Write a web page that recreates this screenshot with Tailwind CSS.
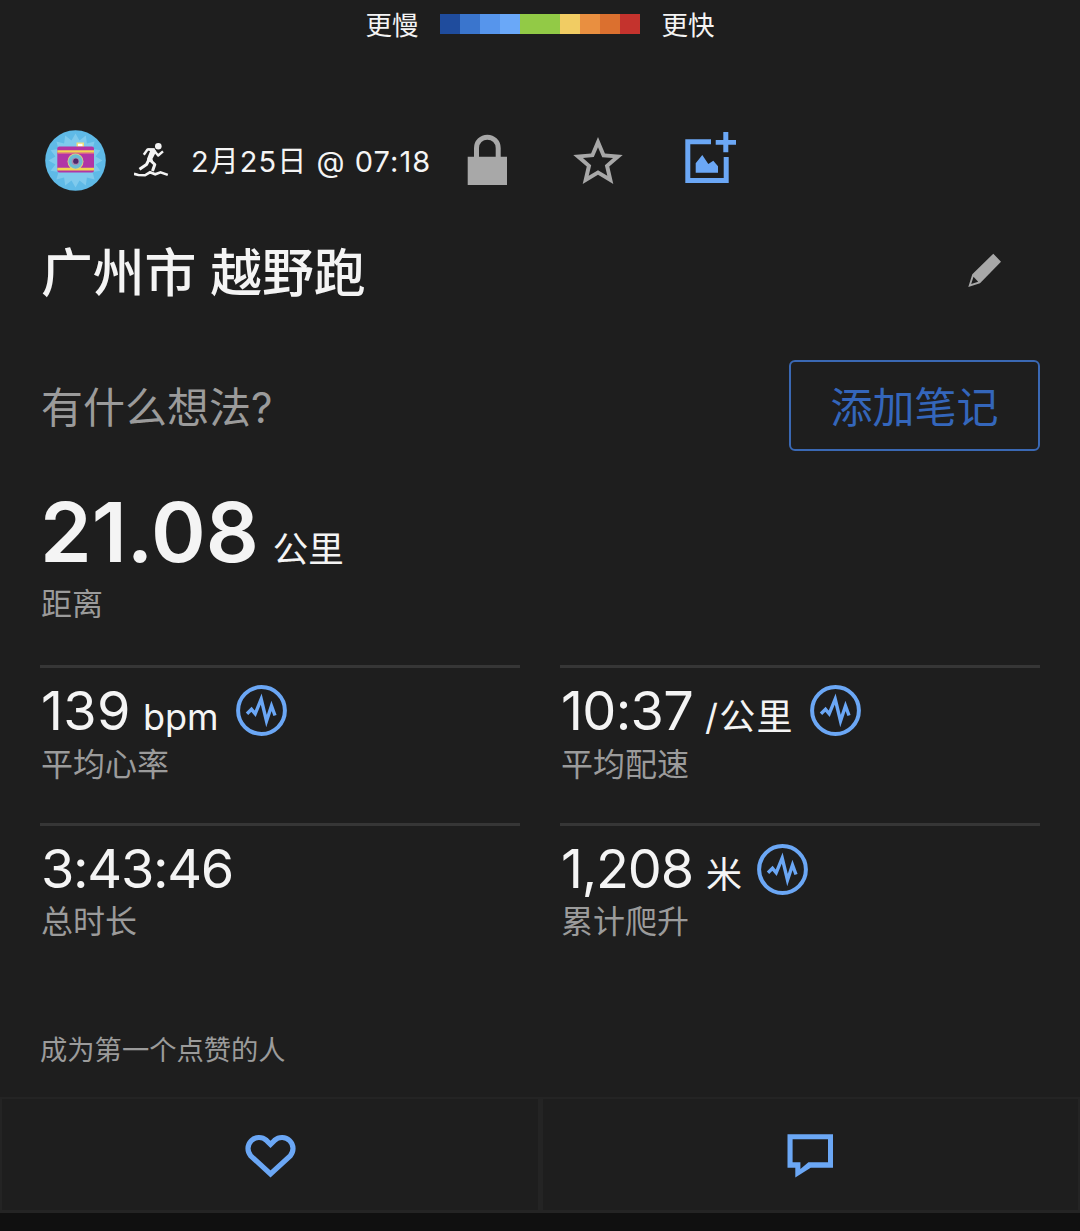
<!DOCTYPE html>
<html lang="zh-CN">
<head>
  <meta charset="UTF-8">
  <meta name="viewport" content="width=device-width, initial-scale=1.0">
  <title>广州市 越野跑</title>
  <script src="https://cdn.jsdelivr.net/npm/@tailwindcss/browser@4"></script>
</head>
<body class="flex min-h-[1231px] w-[1080px] flex-col bg-[#1e1e1e] font-['Inter','Noto_Sans_CJK_SC',sans-serif] text-[#f4f4f4]">
  <!-- Pace legend -->
  <div class="flex h-12 items-center justify-center gap-[21px] text-[26.5px] leading-none">
    <span class="pt-0.5">更慢</span>
    <div class="flex h-5 w-[201px]">
      <div class="flex-1 bg-[#1f4c9d]"></div>
      <div class="flex-1 bg-[#3a75cd]"></div>
      <div class="flex-1 bg-[#5695ec]"></div>
      <div class="flex-1 bg-[#6aa8f8]"></div>
      <div class="flex-2 bg-[#92ca46]"></div>
      <div class="flex-1 bg-[#f1cc63]"></div>
      <div class="flex-1 bg-[#e98f40]"></div>
      <div class="flex-1 bg-[#db702f]"></div>
      <div class="flex-1 bg-[#c4332d]"></div>
    </div>
    <span class="pt-0.5">更快</span>
  </div>

  <main class="flex flex-col px-10">
    <!-- Activity meta -->
    <div class="mt-20 flex h-16 items-center pl-[5px]">
      <svg class="size-[61px]" viewBox="0 0 61 61">
        <circle cx="30.5" cy="30.5" r="30.3" fill="#5fbae7"/>
        <path fill="#7fcaed" d="M57.5 30.5L50.6 34.5 55.4 40.8 47.5 41.9 49.6 49.6 41.9 47.5 40.8 55.4 34.5 50.6 30.5 57.5 26.5 50.6 20.2 55.4 19.1 47.5 11.4 49.6 13.5 41.9 5.6 40.8 10.4 34.5 3.5 30.5 10.4 26.5 5.6 20.2 13.5 19.1 11.4 11.4 19.1 13.5 20.2 5.6 26.5 10.4 30.5 3.5 34.5 10.4 40.8 5.6 41.9 13.5 49.6 11.4 47.5 19.1 55.4 20.2 50.6 26.5z"/>
        <path fill="#f3e07a" d="M31.5 12.5h7.500v6h-7.500z"/>
        <path fill="#fff" d="M33 13.8h4.500v2.500h-4.500z"/>
        <rect x="12.300" y="16.500" width="36.700" height="26" rx="2" fill="#b135a6"/>
        <path fill="#f2d651" d="M12.300 20.200H49v2.600H12.300zM12.300 37.800H49v2.600H12.300z"/>
        <path fill="#d95f8d" d="M12.300 22.800H49v1.200H12.300z"/>
        <circle cx="30.500" cy="31.500" r="8" fill="#e4d676"/>
        <circle cx="30.500" cy="31.500" r="7.200" fill="#6cbcd3"/>
        <circle cx="30.500" cy="31.500" r="3.800" fill="#a78bb0"/>
        <circle cx="30.800" cy="31.200" r="2.600" fill="#51276b"/>
      </svg>
      <svg class="ml-7 h-9 w-[35px]" viewBox="0 0 35 36" fill="none" stroke="#f4f4f4">
        <circle cx="24.300" cy="4.300" r="3.300" fill="#f4f4f4" stroke="none"/>
        <path fill="#f4f4f4" stroke="none" d="M13.500 6.300l7 .2 1.800 3-3.800 7.200.6 2.800-5.600.3-.5-3 3-7.500z"/>
        <path stroke-width="2.400" stroke-linejoin="round" d="M9.800 12.800L13.500 7.500H20.500M20 8.500l4.200 5 4.800-4.200"/>
        <path stroke-width="3" stroke-linejoin="round" d="M15.500 17.500l5.300 5L18.500 29M15 17.500l-2.500 5-7 4.800"/>
        <path stroke-width="2.600" d="M0 31.800l4.300 1.200 6.700.3 5-3 5.200 2 5.300-2 7.300 2.600"/>
      </svg>
      <span class="ml-[22px] w-60 pt-0.5 text-[29px] leading-none tracking-[1.050px] whitespace-nowrap">2月25日 @ 07:18</span>
      <svg class="mb-0.5 ml-[36px] h-[51px] w-10" viewBox="0 0 40 51">
        <path fill="none" stroke="#a8a8a8" stroke-width="5" d="M9.500 25V14a10.850 10.850 0 0 1 21.700 0v11"/>
        <path fill="#a8a8a8" d="M.7 22.700H40V51H.7z"/>
      </svg>
      <svg class="ml-[66px] h-[47px] w-[50px]" viewBox="2 2 20 19" fill="#a8a8a8">
        <path d="M22 9.240l-7.190-.62L12 2 9.190 8.630 2 9.240l5.460 4.730L5.820 21 12 17.270 18.180 21l-1.630-7.030L22 9.240zM12 15.400l-3.760 2.270 1-4.280-3.320-2.880 4.380-.38L12 6.100l1.710 4.040 4.380.38-3.320 2.880 1 4.280L12 15.400z"/>
      </svg>
      <svg class="mb-[5px] ml-[62px] size-[51px]" viewBox="0 0 51 51" fill="#6ba7f5">
        <path d="M.3 7.300H26v5H5.300V46h33.400V25h5v26H.3zM38.300 0h5v8H51v4.800h-7.700v7.500h-5v-7.500h-7.600V8h7.600z"/>
        <path d="M10.700 40.700v-9.400L17.300 23l6 9 5-3.300 4.700 5.600v6.400z"/>
      </svg>
    </div>

    <!-- Title -->
    <div class="mt-12 flex h-16 items-center justify-between pr-[38px]">
      <h1 class="pt-[3px] pl-px text-[51.8px] leading-none font-medium">广州市 越野跑</h1>
      <svg class="mb-[3px] h-[35px] w-[34px]" viewBox="0 0 34 35" fill="#a8a8a8" fill-rule="evenodd">
        <path d="M25.300.7L33 8.700 12 30.300.3 34l4-12.700zM5.500 23.800L3.200 31l7-2.200z"/>
      </svg>
    </div>

    <!-- Notes -->
    <div class="mt-14 flex h-[91px] items-center justify-between">
      <p class="pt-[5px] pl-px text-[42px] leading-none text-[#9b9b9b]">有什么想法?</p>
      <button class="h-full w-[251px] rounded-md border-[2.5px] border-[#3a68b3] pt-[5px] text-[42px] leading-none text-[#3466bb]">添加笔记</button>
    </div>

    <!-- Distance -->
    <div class="mt-10 flex h-[83px] items-baseline gap-3.5 leading-[83px]">
      <span class="text-[83px] font-semibold">21.08</span>
      <span class="pt-0.5 text-[35.5px]">公里</span>
    </div>
    <p class="pl-px text-[31px] leading-[60px] text-[#9b9b9b]">距离</p>

    <!-- Stats -->
    <div class="mt-[31px] grid grid-cols-2 gap-x-10">
      <div class="h-[158px] border-t-3 border-[#363636] pt-[15px] pl-px">
        <div class="flex h-14 items-center">
          <div class="flex h-14 items-baseline gap-3 leading-14">
            <span class="text-[54px] tracking-[0.4px]">139</span>
            <span class="text-[36px]">bpm</span>
          </div>
          <svg class="mb-0.5 ml-[17px] size-[51px]" viewBox="-25.500 -25.500 51 51" fill="none" stroke="#6ba7f5">
            <circle r="23.400" stroke-width="4"/>
            <path stroke-width="3.400" d="M-14.500 3.300l4.500-4.500 3.700 4.500L-.3-11.500 5 10.500 10-4.500l3.500 9.500"/>
          </svg>
        </div>
        <p class="pt-px text-[32px] leading-[50px] text-[#9b9b9b]">平均心率</p>
      </div>
      <div class="h-[158px] border-t-3 border-[#363636] pt-[15px] pl-px">
        <div class="flex h-14 items-center">
          <div class="flex h-14 items-baseline gap-3 leading-14">
            <span class="text-[54px] tracking-[-0.7px]">10:37</span>
            <span class="text-[36px] tracking-[1.200px]">/公里</span>
          </div>
          <svg class="mb-0.5 ml-4 size-[51px]" viewBox="-25.500 -25.500 51 51" fill="none" stroke="#6ba7f5">
            <circle r="23.400" stroke-width="4"/>
            <path stroke-width="3.400" d="M-14.500 3.300l4.500-4.500 3.700 4.500L-.3-11.500 5 10.500 10-4.500l3.500 9.500"/>
          </svg>
        </div>
        <p class="pt-px text-[32px] leading-[50px] text-[#9b9b9b]">平均配速</p>
      </div>
      <div class="h-[158px] border-t-3 border-[#363636] pt-[15px] pl-px">
        <div class="flex h-14 items-center">
          <span class="text-[54px] leading-14 tracking-[-1.3px]">3:43:46</span>
        </div>
        <p class="text-[32px] leading-[50px] text-[#9b9b9b]">总时长</p>
      </div>
      <div class="h-[158px] border-t-3 border-[#363636] pt-[15px] pl-px">
        <div class="flex h-14 items-center">
          <div class="flex h-14 items-baseline gap-[13px] leading-14">
            <span class="text-[54px] tracking-[-1.2px]">1,208</span>
            <span class="text-[36px]">米</span>
          </div>
          <svg class="ml-[15px] size-[51px]" viewBox="-25.500 -25.500 51 51" fill="none" stroke="#6ba7f5">
            <circle r="23.400" stroke-width="4"/>
            <path stroke-width="3.400" d="M-14.500 3.300l4.500-4.500 3.700 4.500L-.3-11.500 5 10.500 10-4.500l3.500 9.500"/>
          </svg>
        </div>
        <p class="text-[32px] leading-[50px] text-[#9b9b9b]">累计爬升</p>
      </div>
    </div>

    <p class="mt-[50px] mb-[-2px] text-[27.300px] leading-10 text-[#9b9b9b]">成为第一个点赞的人</p>
  </main>

  <!-- Like / comment -->
  <div class="mt-7 grid h-[116px] grid-cols-2 gap-[5px] bg-[#242424] p-[2px] pb-[3px]">
    <button class="flex items-center justify-center bg-[#1e1e1e] pt-0.5 pl-px">
      <svg class="h-11 w-[51px]" viewBox="0 0 51 44" fill="none" stroke="#6ba7f5" stroke-width="5.200">
        <path d="M25.500 10.300L21.400 6.300A11.050 11.050 0 0 0 5.800 21.900L25.500 40 45.200 21.900A11.050 11.050 0 0 0 29.600 6.300z"/>
      </svg>
    </button>
    <button class="flex items-center justify-center bg-[#1e1e1e] pt-0.5">
      <svg class="h-11 w-[46px]" viewBox="0 0 46 44" fill="#6ba7f5" fill-rule="evenodd">
        <path d="M.5.300H46v33.400H23.700L8.300 43.500v-9.800H.5zM5.600 5.300V28.300h7.800v6.600l8-6.600H41v-23z"/>
      </svg>
    </button>
  </div>
  <div class="flex-1 bg-[#101010]"></div>
</body>
</html>
